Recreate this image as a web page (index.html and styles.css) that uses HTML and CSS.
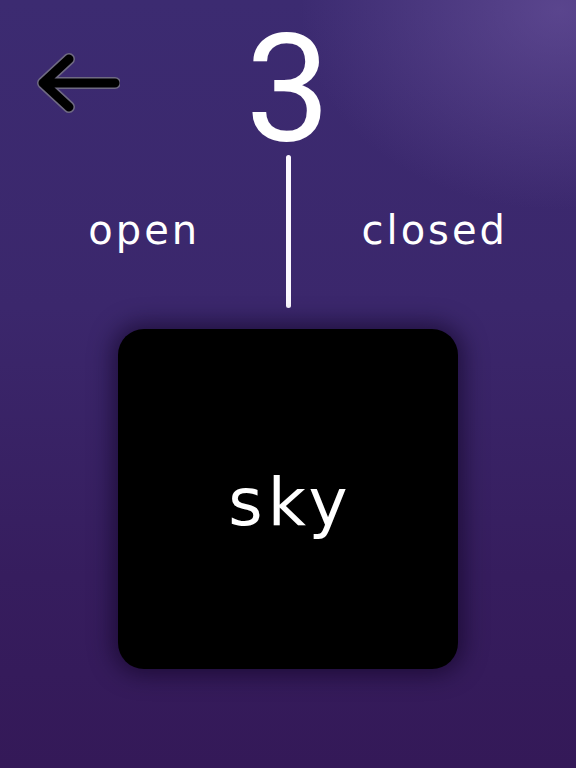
FILE: index.html
```html
<!DOCTYPE html>
<html lang="en">
<head>
<meta charset="utf-8">
<title>Counter</title>
<link rel="stylesheet" href="styles.css">
</head>
<body>
<main class="screen">
  <header class="top">
    <button class="back" aria-label="Back">
      <svg class="back-icon" width="90" height="70" viewBox="0 0 90 70">
        <path class="arrow-outline" d="M39 11 L13 35 L39 59 M13 35 L85 35"/>
        <path class="arrow-core" d="M39 11 L13 35 L39 59 M13 35 L85 35"/>
      </svg>
    </button>
    <div class="count">3</div>
    <div class="spacer"></div>
  </header>
  <section class="split">
    <div class="label">open</div>
    <div class="divider"></div>
    <div class="label">closed</div>
  </section>
  <section class="card-wrap">
    <div class="card"><span class="word">sky</span></div>
  </section>
</main>
</body>
</html>
```
FILE: styles.css
```css
html, body {
  margin: 0;
  padding: 0;
}
body {
  width: 576px;
  height: 768px;
  overflow: hidden;
  font-family: "DejaVu Sans", "Liberation Sans", sans-serif;
  color: #fff;
  background:
    radial-gradient(ellipse 260px 200px at 560px 10px, rgba(120, 95, 170, 0.5), rgba(120, 95, 170, 0) 100%),
    linear-gradient(180deg, #3c2b71 0%, #3b276c 40%, #361d5e 75%, #341958 100%);
}
.screen {
  display: flex;
  flex-direction: column;
  height: 768px;
}
.top {
  display: grid;
  grid-template-columns: 1fr auto 1fr;
  grid-template-rows: 155px;
  height: 155px;
}
.back {
  justify-self: start;
  align-self: start;
  margin: 48px 0 0 30px;
  padding: 0;
  border: 0;
  background: none;
  width: 90px;
  height: 70px;
}
.back-icon {
  display: block;
}
.arrow-outline {
  fill: none;
  stroke: #6f6a82;
  stroke-width: 12;
  stroke-linecap: round;
  stroke-linejoin: round;
}
.arrow-core {
  fill: none;
  stroke: #000;
  stroke-width: 9;
  stroke-linecap: round;
  stroke-linejoin: round;
}
.count {
  font-family: Roboto, "Open Sans", sans-serif;
  font-weight: 400;
  font-size: 151px;
  line-height: normal;
  text-align: center;
  align-self: start;
  margin-top: 1px;
}
.split {
  display: grid;
  grid-template-columns: 1fr 5px 1fr;
  align-items: center;
  height: 153px;
}
.label {
  font-size: 40px;
  letter-spacing: 3px;
  padding-left: 3px;
  text-align: center;
  margin-top: -4px;
}
.divider {
  width: 5px;
  height: 153px;
  border-radius: 3px;
  background: #fbf8ff;
}
.card-wrap {
  display: flex;
  justify-content: center;
  margin-top: 21px;
}
.card {
  width: 340px;
  height: 340px;
  border-radius: 26px;
  background: #000;
  box-shadow: 0 0 22px 6px rgba(12, 2, 30, 0.55);
  display: flex;
  align-items: center;
  justify-content: center;
}
.word {
  font-size: 66px;
  letter-spacing: 5px;
  padding-left: 5px;
  padding-top: 6px;
}
```
